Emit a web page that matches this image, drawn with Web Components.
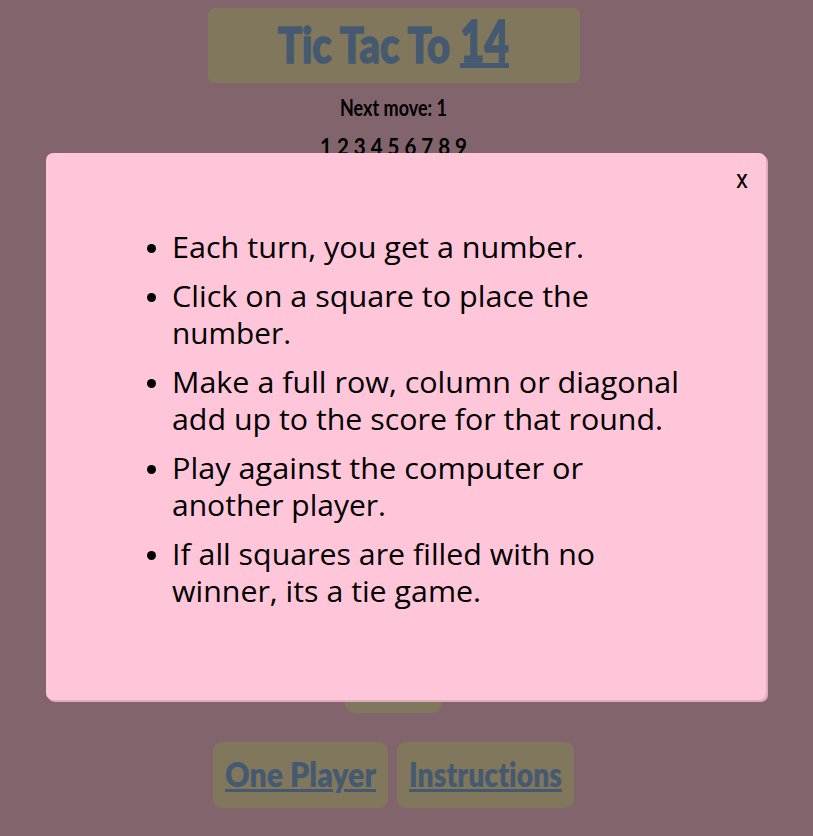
<!DOCTYPE html>
<html lang="en"><head><meta charset="utf-8"><title>Tic Tac To 14</title>
<style>html,body{margin:0;height:100%;overflow:hidden;background:#82646d;color:#000;font-family:Lato,sans-serif}</style></head>
<body><game-app></game-app>
<script>
// One line of text, fitted horizontally to the width given in its attribute.
class FitText extends HTMLElement{
 constructor(){super();this.attachShadow({mode:'open'}).innerHTML=`<style>:host{display:block;white-space:nowrap}span{display:inline-block;transform-origin:0 50%;text-decoration:var(--line,none);text-underline-offset:2px}</style><span><slot></slot></span>`}
 connectedCallback(){
  const w=+this.getAttribute('w');this.style.width=w+'px';
  const s=this.shadowRoot.querySelector('span');
  requestAnimationFrame(()=>{s.style.transform='scaleX('+w/s.getBoundingClientRect().width+')'});
 }
}
customElements.define('fit-text',FitText);

customElements.define('game-title',class extends HTMLElement{
 constructor(){super();this.attachShadow({mode:'open'}).innerHTML=`<style>
 :host{display:flex;box-sizing:border-box;width:372px;height:75px;border-radius:6px;background:#81775c;color:#455a70;padding-left:70px;gap:10px;font-weight:900;-webkit-text-stroke:1.6px #455a70}
 .name{font-size:49px;line-height:73px}
 .score{font-size:57px;line-height:64px;height:55px;border-bottom:5px solid #455a70}
 </style><fit-text class="name" w="172">Tic Tac To</fit-text><fit-text class="score" w="49">14</fit-text>`}
});

customElements.define('game-button',class extends HTMLElement{
 constructor(){super();const w=this.getAttribute('text-width');
 this.attachShadow({mode:'open'}).innerHTML=`<style>
 :host{display:block;box-sizing:border-box;height:66px;padding:0 12px;border-radius:9px;background:#81775c;color:#455a70;font-size:34px;line-height:63px;font-weight:800;font-variant-ligatures:none;--line:underline 3px}
 </style><fit-text w="${w}"><slot></slot></fit-text>`}
});

customElements.define('rules-dialog',class extends HTMLElement{
 constructor(){super();
 const rules=[[['Each turn, you get a number.',412]],[['Click on a square to place the',417],['number.',119]],[['Make a full row, column or diagonal',507],['add up to the score for that round.',491]],[['Play against the computer or',411],['another player.',214]],[['If all squares are filled with no',423],['winner, its a tie game.',309]]];
 this.attachShadow({mode:'open'}).innerHTML=`<style>
 :host{display:block;position:absolute;left:46px;top:153px;width:720px;height:547px;border-radius:7px;background:#ffc5d9;box-shadow:2px 2px 0 #dfacbd}
 header{display:flex;justify-content:flex-end;padding:12px 18px 0 0;height:63px;font:400 25px/30px Roboto,sans-serif}
 ul{display:flex;flex-direction:column;gap:12px;list-style:none;margin:0;padding:0 0 0 101px;font:30px/37px "Open Sans",sans-serif}
 li{display:flex;gap:16px}
 i{width:9px;height:9px;border-radius:50%;background:#000;margin-top:16px}
 </style><header><fit-text w="12">x</fit-text></header><ul>${rules.map(r=>`<li><i></i><div>${r.map(l=>`<fit-text w="${l[1]}">${l[0]}</fit-text>`).join('')}</div></li>`).join('')}</ul>`}
});

customElements.define('game-app',class extends HTMLElement{
 constructor(){super();this.attachShadow({mode:'open'}).innerHTML=`<style>
 :host{display:flex;flex-direction:column;align-items:center;box-sizing:border-box;width:787px;height:836px;padding-top:8px}
 game-title{margin-left:1px}
 .next{font-size:22px;line-height:34px;font-weight:700;margin-top:8px}
 .digits{font-size:22px;line-height:34px;font-weight:700;margin-top:5px}
 .board{flex:1}
 .reset{width:97px;height:40px;border-radius:10px;background:#81775c}
 .row{display:flex;gap:9px;margin:29px 0 28px}
 </style><game-title></game-title>
 <fit-text class="next" w="107">Next move: 1</fit-text>
 <fit-text class="digits" w="147">1 2 3 4 5 6 7 8 9</fit-text>
 <div class="board"></div><div class="reset"></div>
 <div class="row"><game-button text-width="151">One Player</game-button><game-button text-width="153">Instructions</game-button></div>
 <rules-dialog></rules-dialog>`}
});
</script></body></html>
